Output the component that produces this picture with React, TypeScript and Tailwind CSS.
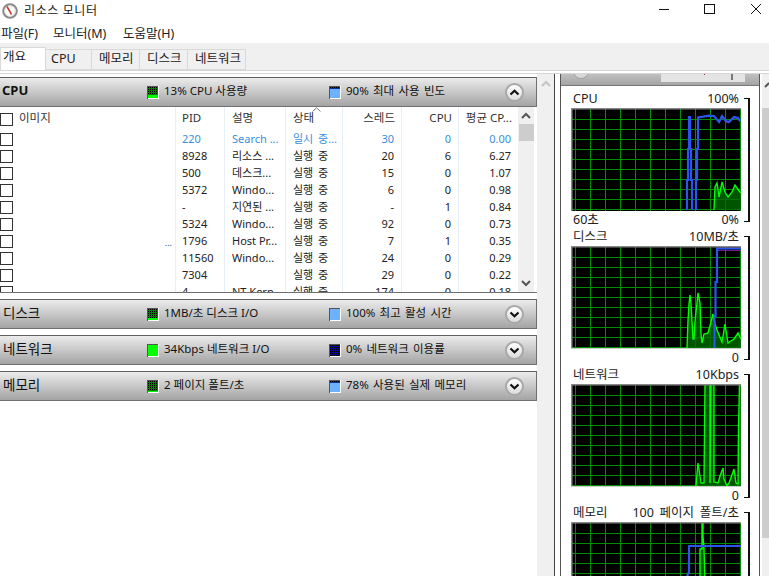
import React from "react";

const rows = [
  ["220", "Search ...", "일시 중...", "30", "0", "0.00"],
  ["8928", "리소스 ...", "실행 중", "20", "6", "6.27"],
  ["500", "데스크...", "실행 중", "15", "0", "1.07"],
  ["5372", "Windo...", "실행 중", "6", "0", "0.98"],
  ["-", "지연된 ...", "실행 중", "-", "1", "0.84"],
  ["5324", "Windo...", "실행 중", "92", "0", "0.73"],
  ["1796", "Host Pr...", "실행 중", "7", "1", "0.35"],
  ["11560", "Windo...", "실행 중", "24", "0", "0.29"],
  ["7304", "", "실행 중", "29", "0", "0.22"],
  ["4", "NT Kern...", "실행 중", "174", "0", "0.18"],
];

function Swatch({ color, bg, fill }: { color: string; bg: string; fill: number }) {
  const dots = [];
  const h = 11 - fill;
  for (let y = 0; y < h; y += 2) for (let x = 0; x < 10; x += 2) dots.push(<rect key={x + "-" + y} x={x + 1} y={y + 1} width="1" height="1" fill="#000" />);
  return (
    <svg width="12" height="13" viewBox="0 0 12 13" className="shrink-0">
      <rect x="0" y="0" width="12" height="13" fill="#fff" />
      <rect x="0" y="0" width="11" height="1" fill="#555" />
      <rect x="0" y="0" width="1" height="13" fill="#555" />
      <rect x="1" y="1" width="10" height="11" fill={color} />
      {h > 0 && <rect x="1" y="1" width="10" height={h} fill={bg} />}
      {h > 0 && <g>{dots}</g>}
    </svg>
  );
}

function Chevron({ up }: { up: boolean }) {
  return (
    <span className="w-[19px] h-[19px] rounded-full border-2 border-[#a8a8a8] bg-gradient-to-b from-[#ffffff] to-[#dcdcdc] flex items-center justify-center shrink-0">
      <svg width="11" height="7" viewBox="0 0 11 7">
        <path d={up ? "M1.5 5.5 L5.5 1.8 L9.5 5.5" : "M1.5 1.5 L5.5 5.2 L9.5 1.5"} fill="none" stroke="#111" strokeWidth="2.2" />
      </svg>
    </span>
  );
}

function Section({ title, bold, sw1, t1, sw2, t2, up }: { title: string; bold?: boolean; sw1: React.ReactNode; t1: string; sw2: React.ReactNode; t2: string; up?: boolean }) {
  return (
    <div className="h-[30px] shrink-0 border border-l-0 border-[#707070] border-t-[#606060] bg-gradient-to-b from-[#ececec] to-[#a4a4a4] flex items-center text-[#111]">
      <span className={"w-[147px] shrink-0 -mt-[2px] " + (bold ? "font-bold text-[13px] pl-[2px]" : "text-[13.5px] pl-[3px]")}>{title}</span>
      <span className="w-[182px] flex items-center gap-[5px] shrink-0 text-[11.5px] whitespace-nowrap">{sw1}<span className="-mt-[2px]">{t1}</span></span>
      <span className="w-[176px] flex items-center gap-[5px] shrink-0 text-[11.5px] whitespace-nowrap [word-spacing:1.3px]">{sw2}<span className="-mt-[2px]">{t2}</span></span>
      <Chevron up={!!up} />
    </div>
  );
}

function Check() {
  return <span className="block w-[13px] h-[13px] border border-[#333] bg-white shrink-0" />;
}

function Grid() {
  const v = [];
  for (let i = 0; i < 12; i++) v.push(<line key={"v" + i} x1={4.5 + i * 15} x2={4.5 + i * 15} y1="0" y2="103" stroke="#008f00" strokeWidth="1" />);
  const h = [];
  for (let i = 0; i < 10; i++) h.push(<line key={"h" + i} y1={11.5 + i * 10} y2={11.5 + i * 10} x1="0" x2="170" stroke="#008f00" strokeWidth="1" />);
  return <g>{v}{h}</g>;
}

function Graph({ children, height = 103, light }: { children?: React.ReactNode; height?: number; light?: boolean }) {
  return (
    <svg width="170" height={height} viewBox={`0 0 170 ${height}`} className="block">
      <rect width="170" height={height} fill="#000" />
      <Grid />
      {children}
      <rect x="0" y="0" width="170" height="1.5" fill="#888" />
      <rect x="0" y="0" width="1.5" height={height} fill="#888" />
      {light && <rect x="0" y={height - 1} width="170" height="1" fill="#ccc" />}
    </svg>
  );
}

function Area({ pts, base = 102 }: { pts: string; base?: number }) {
  const first = pts.trim().split(" ")[0].split(",")[0];
  const last = pts.trim().split(" ").slice(-1)[0].split(",")[0];
  return (
    <g>
      <polygon points={`${first},${base} ${pts} ${last},${base}`} fill="#006a00" fillOpacity="0.8" />
      <polyline points={pts} fill="none" stroke="#00ff00" strokeWidth="1.4" />
    </g>
  );
}

function Blue({ pts }: { pts: string }) {
  return <polyline points={pts} fill="none" stroke="#2b55ee" strokeWidth="2.2" />;
}

function Block({ left, right, bottomLeft, bottomRight, wide, children }: { left: string; right: string; bottomLeft?: string; bottomRight: string; wide?: boolean; children: React.ReactNode }) {
  return (
    <div className="flex h-[138px] shrink-0 pl-[10px]">
      <div className="w-[170px] shrink-0">
        <div className="h-[17px] flex justify-between items-center pl-[2px] text-[12.5px] text-[#222] whitespace-nowrap"><span>{left}</span><span className={"pr-[2px] " + (wide ? "[word-spacing:2.5px]" : "")}>{right}</span></div>
        {children}
        <div className="h-[18px] flex justify-between items-center pl-[2px] text-[12.5px] text-[#222] whitespace-nowrap"><span>{bottomLeft}</span><span className="pr-[2px]">{bottomRight}</span></div>
      </div>
      <div className="mt-[7px] ml-[3px] h-[124px] w-[6px] border-t border-b border-r-2 border-[#111]" />
    </div>
  );
}

const cell = "border-r border-[#e6eef7] px-[7px] overflow-hidden whitespace-nowrap";

export default function App() {
  return (
    <div className="w-[769px] h-[576px] overflow-hidden bg-white flex flex-col text-[#111]" style={{ fontFamily: '"Noto Sans","Noto Sans CJK KR",sans-serif' }}>
      <div className="h-[20px] shrink-0 flex items-center pl-[2px]">
        <svg width="17" height="17" viewBox="0 0 17 17" className="shrink-0">
          <circle cx="8" cy="9" r="6.8" fill="#fff" stroke="#8a8a8a" strokeWidth="2" />
          <circle cx="8" cy="9" r="5.2" fill="#fff" stroke="#d0d0d0" strokeWidth="0.6" />
          <path d="M5 4.5 L9.5 12.5" stroke="#d23a2a" strokeWidth="1.6" />
        </svg>
        <span className="ml-[5px] mt-[1px] text-[12px] tracking-[0.6px] text-[#222]">리소스 모니터</span>
        <div className="ml-auto flex items-center mb-[2px]">
          <svg width="10" height="10" viewBox="0 0 10 10" className="mr-[35px]"><line x1="0" x2="10" y1="5.5" y2="5.5" stroke="#111" /></svg>
          <svg width="11" height="10" viewBox="0 0 11 10" className="mr-[36px]"><rect x="0.5" y="0.5" width="10" height="9" fill="none" stroke="#111" /></svg>
          <svg width="10" height="10" viewBox="0 0 10 10" className="mr-[8px]"><path d="M0 0 L10 10 M10 0 L0 10" stroke="#111" /></svg>
        </div>
      </div>
      <div className="h-[23px] shrink-0 flex items-center text-[12.5px] text-[#222] pl-[1px] pt-[5px] whitespace-nowrap">
        <span className="w-[52px]">파일(F)</span>
        <span className="w-[70px]">모니터(M)</span>
        <span>도움말(H)</span>
      </div>
      <div className="h-[27px] shrink-0 bg-[#f0f0f0] flex items-end text-[12.5px] text-[#222] whitespace-nowrap">
        <span className="w-[46px] h-[23px] bg-white border border-[#d9d9d9] border-b-0 pl-[2px] pb-[3px] flex items-center">개요</span>
        <span className="w-[46px] h-[21px] border-t border-r border-b border-[#d9d9d9] pl-[5px] flex items-center">CPU</span>
        <span className="w-[48px] h-[21px] border-t border-r border-b border-[#d9d9d9] pl-[7px] flex items-center">메모리</span>
        <span className="w-[48px] h-[21px] border-t border-r border-b border-[#d9d9d9] pl-[7px] flex items-center">디스크</span>
        <span className="w-[58px] h-[21px] border-t border-r border-b border-[#d9d9d9] pl-[7px] flex items-center">네트워크</span>
      </div>
      <div className="h-[4px] shrink-0 border-t border-b border-[#d6d6d6] bg-white" />
      <div className="flex-1 min-h-0 flex">
        <div className="w-[537px] shrink-0 pt-[3px] flex flex-col gap-[6px]">
          <div className="flex flex-col">
            <Section bold title="CPU" sw1={<Swatch color="#00ff00" bg="#0a7a0a" fill={3} />} t1="13% CPU 사용량" sw2={<Swatch color="#6cb2ff" bg="#0a2f9f" fill={9} />} t2="90% 최대 사용 빈도" up />
            <div className="h-[186px] flex border-b border-[#707070] text-[11px] overflow-hidden">
              <div className="w-[518px] shrink-0 flex flex-col">
                <div className="h-[24px] flex shrink-0 relative text-[11.5px] text-[#333]">
                  <div className="w-[176px] flex items-start pt-[6px] gap-[6px] border-r border-[#e6eef7]"><Check /><span className="-mt-[4px]">이미지</span></div>
                  <div className="w-[49px] border-r border-[#e6eef7] pl-[6px] pt-[2px]">PID</div>
                  <div className="w-[61px] border-r border-[#e6eef7] pl-[7px] pt-[2px]">설명</div>
                  <div className="w-[57px] border-r border-[#e6eef7] pl-[7px] pt-[2px]">상태</div>
                  <div className="w-[59px] border-r border-[#e6eef7] pr-[6px] pt-[2px] text-right">스레드</div>
                  <div className="w-[57px] border-r border-[#e6eef7] pr-[6px] pt-[2px] text-right">CPU</div>
                  <div className="w-[59px] pr-[6px] pt-[2px] text-right whitespace-nowrap">평균 CP...</div>
                  <svg width="9" height="5" viewBox="0 0 9 5" className="absolute left-[312px] top-0"><path d="M0.5 4.5 L4.5 0.8 L8.5 4.5" fill="none" stroke="#777" /></svg>
                </div>
                {rows.map((r, i) => (
                  <div key={i} className={"h-[17px] shrink-0 flex items-center " + (i === 0 ? "text-[#3a8ee0]" : "text-[#222]")}>
                    <div className="w-[176px] h-full flex items-center justify-between border-r border-[#e6eef7] pr-[3px]">
                      <Check />
                      {i === 6 && <span className="text-[#14558f] text-[9px] leading-none mt-[2px]">...</span>}
                    </div>
                    <div className={"w-[49px] h-full flex items-center " + cell.replace("px-[7px]", "px-[6px]")}>{r[0]}</div>
                    <div className={"w-[61px] h-full flex items-center " + cell}>{r[1]}</div>
                    <div className={"w-[57px] h-full flex items-center [word-spacing:2px] " + cell}>{r[2]}</div>
                    <div className={"w-[59px] h-full flex items-center justify-end " + cell}>{r[3]}</div>
                    <div className={"w-[57px] h-full flex items-center justify-end " + cell}>{r[4]}</div>
                    <div className="w-[59px] h-full flex items-center justify-end px-[7px]">{r[5]}</div>
                  </div>
                ))}
              </div>
              <div className="w-[16px] shrink-0 bg-[#f0f0f0] flex flex-col items-center">
                <svg width="16" height="17" viewBox="0 0 16 17" className="shrink-0"><path d="M4 11 L8 7 L12 11" fill="none" stroke="#555" strokeWidth="2" /></svg>
                <div className="w-[15px] h-[17px] bg-[#cdcdcd]" />
                <div className="flex-1" />
                <svg width="16" height="17" viewBox="0 0 16 17" className="shrink-0"><path d="M4 6 L8 10 L12 6" fill="none" stroke="#555" strokeWidth="2" /></svg>
              </div>
            </div>
          </div>
          <Section title="디스크" sw1={<Swatch color="#00ff00" bg="#0a7a0a" fill={2} />} t1="1MB/초 디스크 I/O" sw2={<Swatch color="#6cb2ff" bg="#0a2f9f" fill={11} />} t2="100% 최고 활성 시간" />
          <Section title="네트워크" sw1={<Swatch color="#00ff00" bg="#0a7a0a" fill={11} />} t1="34Kbps 네트워크 I/O" sw2={<Swatch color="#0000b0" bg="#0000a0" fill={0} />} t2="0% 네트워크 이용률" />
          <Section title="메모리" sw1={<Swatch color="#00ff00" bg="#0a7a0a" fill={1} />} t1="2 페이지 폴트/초" sw2={<Swatch color="#6cb2ff" bg="#0a2f9f" fill={9} />} t2="78% 사용된 실제 메모리" />
        </div>
        <div className="w-[18px] shrink-0 bg-[#f0f0f0] border-r border-[#444] flex justify-center">
          <svg width="16" height="17" viewBox="0 0 16 17" className="mt-[2px]"><path d="M4 10 L8 6 L12 10" fill="none" stroke="#c4c4c4" strokeWidth="2" /></svg>
        </div>
        <div className="w-[5px] shrink-0 bg-white" />
        <div className="w-[200px] shrink-0 border-x border-[#555] flex flex-col">
          <div className="h-[12px] shrink-0 bg-gradient-to-b from-[#c0c0c0] to-[#a4a4a4] border-b border-[#777] relative overflow-hidden">
            <div className="absolute left-[100px] top-0 w-[84px] h-[8px] bg-[#e4e4e4]">
              <div className="absolute left-[70px] top-0 w-[2px] h-[6px] bg-[#777]" />
              <div className="absolute left-[43px] top-0 w-[1px] h-[1px] bg-[#a03030]" />
            </div>
            <div className="absolute left-[12px] -top-[11px] w-[16px] h-[16px] rounded-full bg-[#d8d8d8] border border-[#a0a0a0]" />
          </div>
          <div className="h-[5px] shrink-0" />
          <Block left="CPU" right="100%" bottomLeft="60초" bottomRight="0%">
            <Graph>
              <Area pts="143,102 144,79 146,75 148,89 151,74 154,84 157,89 161,84 164,77 168,83 170,85" />
              <Blue pts="116,102 116,72 117,72 117,41 118,41 118,9 119,9 119,41 120,41 120,72 121,72 121,102" />
              <polyline points="148,15 151,9 155,14 158,15 163,10 167,11 169,14" fill="none" stroke="#6a2080" strokeWidth="1" />
              <Blue pts="125,102 125,72 126,72 126,41 127,41 127,9.5 138,7.6 143,8 148,14 151,8 155,13 158,14 163,9 167,10 169,13" />
            </Graph>
          </Block>
          <Block left="디스크" right="10MB/초" bottomRight="0">
            <Graph light>
              <Area pts="116,102 117,75 118,58 119,49 120,58 121,75 122,93 123,93 124,75 126,57 127,47 129,57 130,88 131,97 133,88 137,87 140,76 142,68 144,78 146,84 151,96 154,78 157,97 163,93 167,87 170,93" />
              <line x1="147" x2="170" y1="4.5" y2="4.5" stroke="#6a2080" />
              <Blue pts="143.5,102 143.5,70 144.5,70 144.5,36 146,36 146,2.5 170,2.5" />
            </Graph>
          </Block>
          <Block left="네트워크" right="10Kbps" bottomRight="0">
            <Graph light>
              <Area pts="125,102 126,90 127,79 129,92 130,99 133,99 134,0 139,0 139,99 140,0 143,0 143,98 147,99 149,92 152,84 153,95 156,102 158,99 163,85 165,99 167,100 167.5,45 168.5,0 170,0" />
            </Graph>
          </Block>
          <Block left="메모리" right="100 페이지 폴트/초" bottomRight="" wide>
            <Graph>
              <Area pts="129,60 129,27 131,27 131,0 132,0 132,14 133,27 134,60" base={60} />
              <Blue pts="116,54 118,50 118,24 170,24" />
            </Graph>
          </Block>
        </div>
        <div className="w-[2px] shrink-0" />
        <div className="flex-1 min-w-0 bg-[#f0f0f0] flex flex-col overflow-hidden">
          <div className="h-[34px] shrink-0 flex justify-start">
            <svg width="7" height="20" viewBox="0 0 7 20" className="mt-[2px] shrink-0"><path d="M3 11 L7 7" fill="none" stroke="#555" strokeWidth="2" /></svg>
          </div>
          <div className="h-[430px] bg-[#cdcdcd] shrink-0" />
        </div>
      </div>
    </div>
  );
}
